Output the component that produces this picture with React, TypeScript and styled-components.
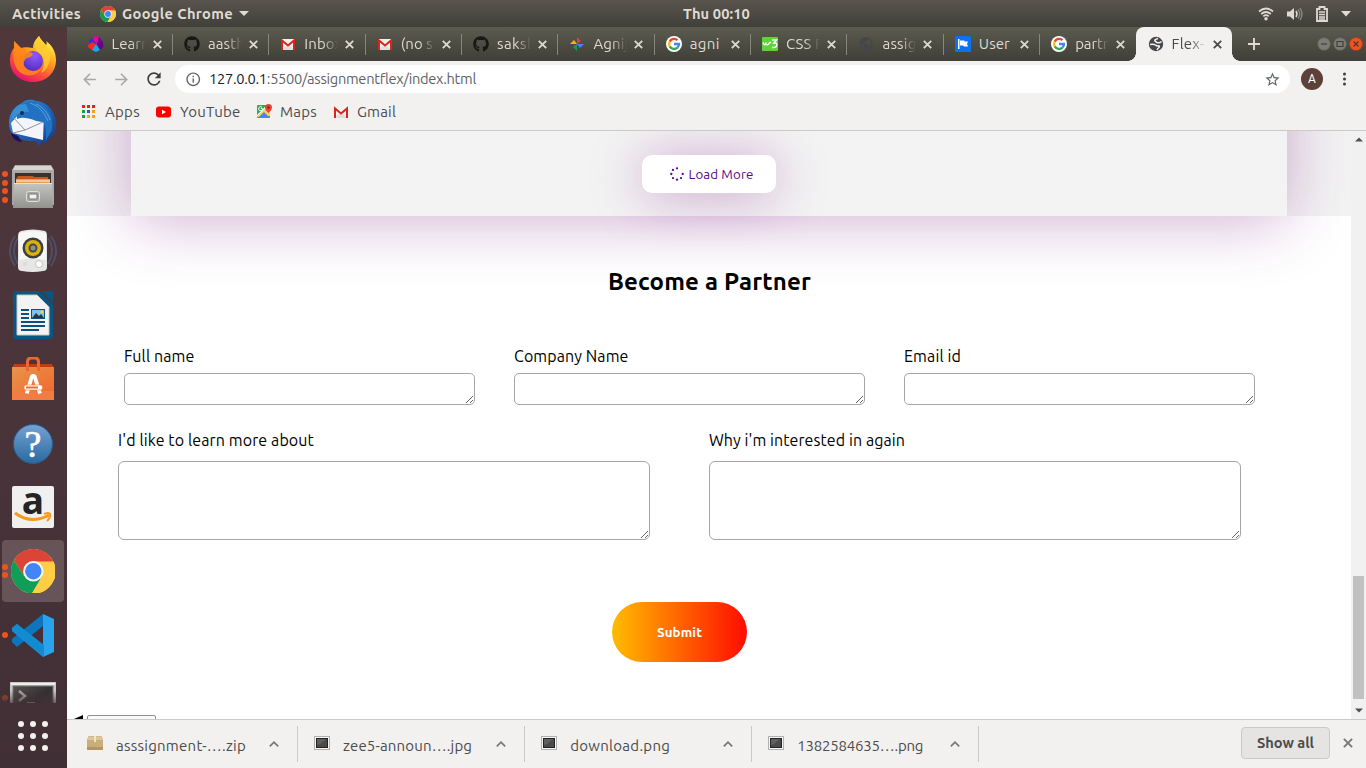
import React, { useLayoutEffect, useRef, useState } from "react";
import styled, { createGlobalStyle, css } from "styled-components";
import { FaGithub } from "react-icons/fa";
import { MdPublic, MdStarBorder, MdRefresh, MdArrowBack, MdArrowForward, MdInfoOutline } from "react-icons/md";

const GlobalStyle = createGlobalStyle`
  * { box-sizing: border-box; }
  html, body { margin: 0; padding: 0; overflow: hidden; }
  body { font-family: Ubuntu, "Noto Sans", "Open Sans", sans-serif; color: #000; }
  svg { display: block; flex: none; }
`;

/* ---------- text that keeps a given line length ---------- */

const Line = styled.span<{ $size: number; $weight?: number; $color?: string }>`
  display: inline-block;
  flex: none;
  white-space: nowrap;
  line-height: 20px;
  font-size: ${(p) => p.$size}px;
  font-weight: ${(p) => p.$weight || 400};
  color: ${(p) => p.$color || "inherit"};
`;

type FitProps = { width: number; size: number; weight?: number; color?: string; children: React.ReactNode };

function Fit({ width, size, weight, color, children }: FitProps) {
  const ref = useRef<HTMLSpanElement>(null);
  const [spacing, setSpacing] = useState(0);
  useLayoutEffect(() => {
    const el = ref.current;
    if (!el) return;
    const length = (el.textContent || "").length;
    el.style.letterSpacing = "0px";
    setSpacing((width - el.getBoundingClientRect().width) / length);
  }, [width]);
  return (
    <Line ref={ref} $size={size} $weight={weight} $color={color} style={{ letterSpacing: `${spacing}px` }}>
      {children}
    </Line>
  );
}

/* ---------- desktop shell ---------- */

const Desktop = styled.div`
  width: 1366px;
  height: 768px;
  display: grid;
  grid-template: 27px 741px / 67px 1299px;
  overflow: hidden;
  background: #fff;
`;

const TopBar = styled.header`
  grid-column: 1 / 3;
  display: grid;
  grid-template-columns: 671px auto 1fr;
  align-items: center;
  padding: 0 15px 0 12px;
  color: #dfdbd2;
  background: linear-gradient(#59554e, #403f39);
`;

const BarGroup = styled.div<{ $end?: boolean; $gap: number }>`
  display: flex;
  align-items: center;
  gap: ${(p) => p.$gap}px;
  justify-content: ${(p) => (p.$end ? "flex-end" : "flex-start")};
`;

const AppName = styled.div`
  display: flex;
  align-items: center;
  gap: 6px;
  margin-left: 19px;
`;

const Dock = styled.nav`
  display: flex;
  flex-direction: column;
  background: linear-gradient(#50373a, #49343a 50%, #402f35);
`;

const Slot = styled.div<{ $active?: boolean; $clip?: boolean }>`
  position: relative;
  height: ${(p) => (p.$clip ? 36 : 64)}px;
  flex: none;
  display: flex;
  justify-content: center;
  align-items: ${(p) => (p.$clip ? "flex-start" : "center")};
  width: 66px;
  overflow: hidden;
  ${(p) =>
    p.$clip &&
    css`
      padding-top: 15px;
      mask-image: linear-gradient(#000 65%, rgba(0, 0, 0, 0.3));
    `}
  ${(p) =>
    p.$active &&
    css`
      height: 62px;
      margin: 1px 2px;
      width: 62px;
      border-radius: 4px;
      background: #665459;
    `}
`;

const RunningDots = styled.div<{ $active?: boolean; $clip?: boolean }>`
  position: absolute;
  left: ${(p) => (p.$active ? 0 : 2)}px;
  top: ${(p) => (p.$clip ? 26 : 0)}px;
  bottom: 0;
  display: flex;
  flex-direction: column;
  justify-content: center;
  gap: 2.6px;
  opacity: ${(p) => (p.$clip ? 0.6 : 1)};
`;

const Dot = styled.i`
  width: 6px;
  height: 6px;
  border-radius: 50%;
  background: #e95420;
`;

const AppsButton = styled.div`
  flex: 1;
  width: 66px;
  display: grid;
  grid-template-columns: repeat(3, 6px);
  grid-auto-rows: 6px;
  gap: 6px;
  justify-content: center;
  align-content: center;
  i { border-radius: 50%; background: #f2f1f0; }
`;

/* ---------- browser chrome ---------- */

const Browser = styled.section`
  display: flex;
  flex-direction: column;
  min-width: 0;
  background: #f2f1f0;
`;

const TabStrip = styled.div`
  height: 34px;
  flex: none;
  display: flex;
  padding-left: 8.6px;
  background: linear-gradient(#5b5b4f, #403f38);
`;

const Tab = styled.div<{ $active?: boolean; $bare?: boolean }>`
  position: relative;
  width: 96.36px;
  flex: none;
  display: flex;
  align-items: center;
  padding-left: 12px;
  gap: 8px;
  color: #dfdbd2;
  &::after {
    content: "";
    position: absolute;
    right: -1px;
    top: 7px;
    width: 1px;
    height: 21px;
    background: ${(p) => (p.$bare || p.$active ? "transparent" : "#87867b")};
  }
  ${(p) =>
    p.$active &&
    css`
      color: #4a4a4a;
      background: #f2f1f0;
      border-radius: 8px 8px 0 0;
      &::before {
        content: "";
        position: absolute;
        left: -8px;
        right: -8px;
        bottom: 0;
        height: 8px;
        background: radial-gradient(circle at 0 0, transparent 7.5px, #f2f1f0 8px) left / 8px 8px no-repeat,
          radial-gradient(circle at 100% 0, transparent 7.5px, #f2f1f0 8px) right / 8px 8px no-repeat;
      }
    `}
`;

const TabTitle = styled.div<{ $fade: boolean }>`
  width: 34px;
  flex: none;
  overflow: hidden;
  height: 20px;
  margin-right: -1px;
  mask-image: ${(p) => (p.$fade ? "linear-gradient(90deg, #000 55%, transparent)" : "none")};
`;

const NewTab = styled.div`
  width: 44px;
  display: flex;
  align-items: center;
  justify-content: center;
`;

const WindowButtons = styled.div`
  margin-left: auto;
  display: flex;
  align-items: center;
  gap: 2px;
  padding-right: 3.5px;
`;

const Toolbar = styled.div`
  height: 36px;
  flex: none;
  display: flex;
  align-items: center;
  padding-left: 12.5px;
  color: #4c4c4c;
`;

const NavIcon = styled.div<{ $dim?: boolean }>`
  width: 32px;
  display: flex;
  color: ${(p) => (p.$dim ? "#a9a8a8" : "#3f3f3f")};
`;

const Omnibox = styled.div`
  width: 1115px;
  height: 28px;
  margin: 0 0 0 -0.5px;
  border-radius: 14px;
  background: #fff;
  display: flex;
  align-items: center;
  padding: 0 9.5px 0 10px;
  gap: 7.5px;
  color: #5f6368;
  > :last-child { margin-left: auto; }
  b { font-weight: 400; color: #202124; }
`;

const Avatar = styled.div`
  width: 22px;
  height: 22px;
  margin: 0 20px 0 11px;
  border-radius: 50%;
  background: #5d4037;
  color: #fff;
  font: 12px/22px Roboto, sans-serif;
  text-align: center;
`;

const Bookmarks = styled.div`
  height: 34px;
  flex: none;
  display: flex;
  align-items: center;
  padding: 0 0 4px 15px;
  border-bottom: 1px solid #cbcac9;
  color: #4c4c4c;
`;

const Bookmark = styled.div<{ $gap: number; $after: number }>`
  display: flex;
  align-items: center;
  gap: ${(p) => p.$gap}px;
  margin-right: ${(p) => p.$after}px;
`;

/* ---------- web page ---------- */

const Viewport = styled.div`
  height: 588px;
  flex: none;
  display: flex;
  background: #fff;
`;

const Page = styled.main`
  width: 1284px;
  height: 588px;
  overflow: hidden;
`;

const Listing = styled.div`
  display: flow-root;
  height: 85px;
  padding: 0 64px;
  background: #f3f3f3;
`;

/* the card goes on above the visible part of the page */
const Card = styled.div`
  height: 385px;
  margin-top: -300px;
  padding-top: 324px;
  display: flex;
  justify-content: center;
  align-items: flex-start;
  background: #f3f3f3;
  box-shadow: 0 5px 60px rgba(110, 0, 115, 0.31);
`;

const LoadMore = styled.div`
  width: 134px;
  height: 38px;
  border-radius: 10px;
  background: #fff;
  display: flex;
  align-items: center;
  padding-left: 28px;
  gap: 4.5px;
  box-shadow: 0 3px 52px rgba(120, 0, 125, 0.34);
  > span { padding-top: 1px; }
`;

const Partner = styled.form`
  position: relative;
  display: flex;
  flex-direction: column;
`;

const Heading = styled.h2`
  margin: 51px 0 0 541px;
  height: 30px;
  line-height: 30px;
  display: flex;
  align-items: center;
`;

const FieldRow = styled.div<{ $left: number; $top: number; $gap: number }>`
  display: flex;
  margin: ${(p) => p.$top}px 0 0 ${(p) => p.$left}px;
  gap: ${(p) => p.$gap}px;
`;

const Field = styled.label<{ $gap: number }>`
  display: flex;
  flex-direction: column;
  align-items: flex-start;
  gap: ${(p) => p.$gap}px;
`;

const Area = styled.textarea<{ $w: number; $h: number; $r: number }>`
  display: block;
  width: ${(p) => p.$w}px;
  height: ${(p) => p.$h}px;
  border: 1px solid #a6a6a6;
  border-radius: ${(p) => p.$r}px;
  background: #fff;
  outline: none;
`;

const Submit = styled.div`
  width: 135px;
  height: 60px;
  margin: 62px 0 0 545px;
  border-radius: 30px;
  display: flex;
  align-items: center;
  justify-content: center;
  background: linear-gradient(90deg, #ffbc00, #ff0c00);
  > span { padding-top: 1px; }
`;

const Footer = styled.div`
  margin: 53px 0 0 7px;
  display: flex;
  gap: 4px;
`;

const Stub = styled.div`
  width: 69px;
  height: 20px;
  border: 1px solid #8f8f8f;
  border-radius: 2px;
  background: #fafafa;
`;

const Scrollbar = styled.div`
  width: 15px;
  display: flex;
  flex-direction: column;
  align-items: center;
  padding: 6px 0;
  background: #f1f1f1;
`;

const Thumb = styled.div`
  width: 11px;
  height: 124px;
  margin: 434px 0 9px;
  background: #c1c1c1;
`;

/* ---------- downloads ---------- */

const Downloads = styled.footer`
  flex: 1;
  display: flex;
  padding: 6px 0 6px 4px;
  border-top: 1px solid #cbcac9;
  color: #4c4c4c;
`;

const Download = styled.div`
  width: 227.1px;
  height: 36px;
  display: flex;
  align-items: center;
  padding: 0 18px 0 16px;
  gap: 13px;
  border-right: 1px solid #cbcac9;
  > :first-child { margin-top: -2px; }
  > :last-child { margin-left: auto; }
  > span { margin-top: 4px; }
`;

const ShowAll = styled.div`
  width: 89px;
  height: 32px;
  margin: 1px 13px 0 auto;
  border: 1px solid #cbcac9;
  border-radius: 4px;
  background: #e5e4e3;
  display: flex;
  align-items: center;
  justify-content: center;
`;

const CloseBar = styled.div`
  display: flex;
  align-items: center;
  height: 34px;
  padding-right: 13px;
`;

/* ---------- drawings ---------- */

const ChromeLogo = ({ size }: { size: number }) => (
  <svg width={size} height={size} viewBox="0 0 48 48">
    <circle cx="24" cy="24" r="24" fill="#ffce44" />
    <path d="M3.2 12A24 24 0 0 1 44.8 12L46 14H24L14 29Z" fill="#db4437" />
    <path d="M3.2 12A24 24 0 0 0 22.5 47.9L34 29H14Z" fill="#0f9d58" />
    <path d="M24 13.500H45.700A24 24 0 0 1 22.500 48L33.500 29Z" fill="#ffce44" />
    <circle cx="24" cy="24" r="11" fill="#f5f5f5" />
    <circle cx="24" cy="24" r="8.800" fill="#4285f4" />
  </svg>
);

const Cross = ({ size = 9, color, w = 1.8 }: { size?: number; color: string; w?: number }) => (
  <svg width={size} height={size} viewBox="0 0 9 9">
    <path d="M.8.8 8.2 8.2M8.2.8.8 8.2" stroke={color} strokeWidth={w} />
  </svg>
);

const Firefox = () => (
  <svg width="46" height="47" viewBox="0 0 46 47">
    <defs>
      <linearGradient id="ffBody" x1=".85" y1=".1" x2=".3" y2="1">
        <stop offset="0" stopColor="#fff44f" /><stop offset=".35" stopColor="#ffa61c" />
        <stop offset=".65" stopColor="#ff5634" /><stop offset="1" stopColor="#e5106e" />
      </linearGradient>
      <radialGradient id="ffCore" cx=".6" cy=".25" r=".8">
        <stop offset="0" stopColor="#9059ff" /><stop offset="1" stopColor="#502bbd" />
      </radialGradient>
    </defs>
    <path d="M29 0c2 4 5 6 7 9 1-1 1-2 0-4 7 5 10 12 10 19 0 13-10 22-23 22S0 37 0 25C0 19 2 14 4 12V5l7 7c3-1 6-1 12 0 0-5 3-9 6-12z" fill="url(#ffBody)" />
    <circle cx="23" cy="25" r="10" fill="url(#ffCore)" />
    <path d="M4 5l7 7c3 0 5 1 6 4 2 0 5 0 6 2-1 3-3 3-6 4-3 2-4 5-3 8 3 5 10 7 17 3-4 8-18 9-24 0C3 27 3 18 4 12z" fill="#ff8a16" opacity=".85" />
    <path d="M29 0c2 6 12 11 11 22-1 7-4 13-9 15 6-10 3-17-3-21-5-4-3-11 1-16z" fill="#ffcd32" opacity=".8" />
  </svg>
);

const Thunderbird = () => (
  <svg width="50" height="48" viewBox="0 0 50 48">
    <defs><linearGradient id="tb" x1="0" y1="0" x2="1" y2="1"><stop offset="0" stopColor="#38a3e0" /><stop offset=".5" stopColor="#1f63b8" /><stop offset="1" stopColor="#133b86" /></linearGradient></defs>
    <path d="M14 4c4-4 10-4 14-2 12 1 20 11 20 23 0 5-1 9-3 12l-1-3c-1 6-5 9-9 11l1-4-6 6-2-5C15 43 5 38 2 31-1 20 3 9 14 4z" fill="url(#tb)" />
    <path d="m3 24 9-10 24 2-1 25L5 34z" fill="#f4f5f8" />
    <path d="m4 17 13 14 18-8M17 31 5 34" fill="none" stroke="#8f929c" />
    <path d="M9 12C13 3 19 0 28 3c12 3 18 15 16 28l-6 10c0-8 0-14-3-18-9 0-16-7-26-3z" fill="#2371c2" />
    <path d="M4 20c0-9 6-15 14-15l3 8C14 12 9 15 4 20z" fill="#3890d4" />
    <path d="M22 4c9 3 14 9 18 18M28 5c7 3 12 9 14 16" fill="none" stroke="#51a5df" />
    <circle cx="14" cy="14" r="2" fill="#152f58" />
    <path d="m3 34 7 3 4 6C8 43 4 39 3 34z" fill="#20105c" />
  </svg>
);

const Files = () => (
  <svg width="42" height="44" viewBox="0 0 42 44">
    <defs><linearGradient id="fl" x1="0" y1="0" x2="0" y2="1"><stop offset="0" stopColor="#c4c4c2" /><stop offset="1" stopColor="#92928f" /></linearGradient></defs>
    <path d="M3 0h36l3 5v35H0V5z" fill="#a9a9a7" />
    <path d="M3 1h36l2 4H1z" fill="#d5d5d3" />
    <path d="M3 8h36v12H3z" fill="#3a302c" />
    <path d="M6 11h15l1 1h14v2l2 1v4H4v-5z" fill="#c9561f" /><path d="M4 14h34v4H4z" fill="#e99a55" /><path d="M4 15.500h34v1H4z" fill="#fff0e0" />
    <path d="M2 18h38l1 25H1z" fill="url(#fl)" />
    <path d="M2 18.500h38" stroke="#e4e4e2" />
    <rect x="14.500" y="26.500" width="13" height="10" rx="2" fill="#a6a6a4" stroke="#dededc" />
    <rect x="17" y="29" width="8" height="5" rx="1" fill="#f1f1f1" stroke="#777" />
  </svg>
);

const Speaker = () => (
  <svg width="50" height="44" viewBox="0 0 50 44">
    <g fill="none" stroke="#506084" opacity=".6"><path d="M7 7Q-3 22 7 37M10 9Q2 22 10 35M43 7Q53 22 43 37M40 9Q48 22 40 35" strokeWidth="2" /></g>
    <path d="M13 2Q25-1 37 2q2 1 2 5v31q0 4-4 4-10 2-21 0-4 0-4-4V7q0-4 3-5z" fill="#e6e7e5" />
    <path d="M11 4Q25 0 38 4v27q-13-3-27 0z" fill="#f7f7f6" />
    <circle cx="25" cy="19" r="10.500" fill="#3e3f3b" /><circle cx="25" cy="19" r="8" fill="#d8b010" />
    <circle cx="25" cy="19" r="4.500" fill="#4a4a42" /><circle cx="25" cy="19" r="2.500" fill="#8e9388" />
    <circle cx="31" cy="35" r="3.500" fill="#fff" stroke="#c5c5c5" /><rect x="15" y="33" width="4" height="4" fill="#ddd" />
  </svg>
);

const Writer = () => (
  <svg width="40" height="48" viewBox="0 0 40 48">
    <path d="M2 0h24l14 14v32l-2 2H2l-2-2V2z" fill="#0a5584" />
    <path d="M28 0h10l2 2v10z" fill="#0a5584" />
    <path d="M4 4h20l12 12v28H4z" fill="#f3f3f2" stroke="#c7c7c7" />
    <g fill="#0b5180"><path d="M8 18h8v2H8zM8 22h8v2H8zM8 26h8v2H8zM8 30h24v2H8zM8 34h24v2H8zM8 38h18v2H8z" /></g>
    <rect x="18" y="18" width="14" height="10" fill="#0b5180" /><rect x="19" y="19" width="12" height="8" fill="#7fc4e8" />
    <path d="m19 27 4-5 3 3 2-2 3 4z" fill="#333" /><circle cx="29" cy="21" r="1.500" fill="#ffd42a" />
  </svg>
);

const Software = () => (
  <svg width="42" height="44" viewBox="0 0 42 44">
    <defs><linearGradient id="sw" x1="0" y1="0" x2="1" y2="1"><stop offset="0" stopColor="#e9944b" /><stop offset="1" stopColor="#f0652b" /></linearGradient></defs>
    <path d="M2 7h38l2 4H0z" fill="#bd3d15" />
    <path d="M0 10h42v33H0z" fill="url(#sw)" /><path d="M0 34h42v9H0z" fill="#f17d43" />
    <path d="M15.500 14V5q0-4 4-4h3q4 0 4 4v9" fill="none" stroke="#e86836" strokeWidth="3" />
    <path d="M14.800 36.500 20 19h2.500L28 36.500" fill="none" stroke="#fff" strokeWidth="3.800" strokeLinejoin="bevel" />
    <rect x="12" y="28" width="18.500" height="5" rx="2" fill="#fff" stroke="#ee7740" strokeWidth=".6" /><path d="M14 30.500h12" stroke="#eb6f34" strokeWidth="2" />
  </svg>
);

const Help = () => (
  <svg width="42" height="44" viewBox="0 0 42 44">
    <defs><linearGradient id="hp" x1="0" y1="0" x2="0" y2="1"><stop offset="0" stopColor="#75a2d5" /><stop offset="1" stopColor="#29699f" /></linearGradient></defs>
    <circle cx="21" cy="23" r="19.500" fill="url(#hp)" stroke="#295d90" />
    <text x="21" y="36" textAnchor="middle" fontFamily="Liberation Serif" fontSize="38" fill="#fff" stroke="#fff" strokeWidth=".6">?</text>
  </svg>
);

const Amazon = () => (
  <svg width="42" height="42" viewBox="0 0 42 42" overflow="visible">
    <rect width="42" height="42" rx="2" fill="#f0f0f0" />
    <text x="21" y="28" textAnchor="middle" fontFamily="Open Sans, Noto Sans" fontWeight="700" fontSize="37" fill="#242424">a</text>
    <path d="M3 27q16 12 34 2" fill="none" stroke="#f79a1c" strokeWidth="3" />
    <path d="M32 28q5-2 6 0 1 3-3 7" fill="none" stroke="#f79a1c" strokeWidth="2" />
  </svg>
);

const VSCode = () => (
  <svg width="43" height="43" viewBox="0 0 43 43">
    <path d="M31 0 42 5v33l-11 5z" fill="#29a3ee" />
    <path d="M31 0v12L5 33l-5-5v-3z" fill="#0b75bd" />
    <path d="M31 43V31L5 10l-5 4v3z" fill="#168ed6" />
    <path d="M0 14l5-4 27 21v12l-2-1z" fill="#128bd0" />
  </svg>
);

const Terminal = () => (
  <svg width="46" height="40" viewBox="0 0 46 40">
    <defs><linearGradient id="tm" x1="0" y1="0" x2="1" y2="1"><stop offset="0" stopColor="#565150" /><stop offset=".5" stopColor="#343031" /><stop offset="1" stopColor="#454142" /></linearGradient></defs>
    <rect width="46" height="40" fill="#c9c8c7" /><rect x="1" y="1" width="44" height="2" fill="#eee" />
    <rect x="3" y="4" width="40" height="36" fill="url(#tm)" stroke="#777" />
    <path d="m9 9 6 5-6 5" fill="none" stroke="#aaa" strokeWidth="2.500" /><path d="M17 21h8" stroke="#aaa" strokeWidth="2" />
  </svg>
);

const GoogleG = () => (
  <svg width="16" height="16" viewBox="0 0 16 16">
    <circle cx="8" cy="8" r="8" fill="#fff" />
    <g fill="none" strokeWidth="2.300">
      <path d="M11.500 4.200A5 5 0 0 0 3.700 5.600" stroke="#ea4335" /><path d="M3.700 5.600A5 5 0 0 0 3.700 10.400" stroke="#fbbc05" />
      <path d="M3.700 10.400A5 5 0 0 0 11.400 11.700" stroke="#34a853" /><path d="M8 8h5A5 5 0 0 1 11.400 11.700" stroke="#4285f4" />
    </g>
  </svg>
);

const GmailM = () => (
  <svg width="16" height="16" viewBox="0 0 16 16">
    <path d="M1 3h14v11H1z" fill="#f1f1f1" /><path d="m1 14 7-5 7 5z" fill="#dedede" />
    <path d="M2 14V4.500l6 5 6-5V14" fill="none" stroke="#d9261c" strokeWidth="2" />
  </svg>
);

const Learn = () => (
  <svg width="16" height="16" viewBox="0 0 16 16">
    <path d="M7 0 11 1 10 8 4 5z" fill="#f000a4" /><path d="m11 1 4 5 .5 5-3.500 3-3-6z" fill="#6b008e" />
    <path d="m0 6 6 0 2 3-4 5-4-3z" fill="#f32b22" /><path d="m8 8 4 6-4 2-4-2z" fill="#18a8ee" /><path d="m4 2 4 6-4-2-4 3 1-4z" fill="#2435d7" />
  </svg>
);

const Pinwheel = () => (
  <svg width="16" height="16" viewBox="0 0 16 16">
    <path d="M8 8V1l4 4z" fill="#db4437" /><path d="M8 8h7l-4 4z" fill="#4285f4" /><path d="M8 8v7l-4-4z" fill="#0f9d58" /><path d="M8 8H1l4-4z" fill="#f4b400" />
  </svg>
);

const W3 = () => (
  <svg width="16" height="16" viewBox="0 0 16 16">
    <rect y="1" width="16" height="14" rx="1" fill="#5fd43a" />
    <path d="M1 6.500q1.500 4 3 1 1.500 3 3.500-.500L9 6M10 4h4.500l-2.500 3q3-.300 2.800 2.200t-4.600 2.300" fill="none" stroke="#fff" strokeWidth="1.500" />
  </svg>
);

const Flag = () => (
  <svg width="16" height="16" viewBox="0 0 16 16"><rect width="16" height="16" rx="1.500" fill="#0b73f0" /><path d="M3 3h1.500v10H3zM5 4.500h4l1 1h3l-1 2.500 1 2.500H9l-1-1H5z" fill="#fff" /></svg>
);

const Globe = () => (
  <svg width="16" height="16" viewBox="0 0 16 16">
    <circle cx="8" cy="8" r="7.200" fill="#45474a" />
    <path d="M13.500 5.500q-2 2-4.500 1Q6 4.800 7 3.800q1-.8 3-1.300M2 8.500q4-.5 5.500.5 1.500 1.500 3 .8 1.500 0 .5 1.700-1.500 1-2 2.500" fill="none" stroke="#f2f1f0" strokeWidth="1.500" />
  </svg>
);

const Apps = () => (
  <svg width="13" height="13" viewBox="0 0 13 13">
    {["#ea1c1c", "#ea1c1c", "#ea1c1c", "#0f9d58", "#1a5fe0", "#fba005", "#0f9d58", "#fba005", "#fba005"].map((c, i) => (
      <rect key={i} x={(i % 3) * 5} y={Math.floor(i / 3) * 5} width="3" height="3" fill={c} />
    ))}
  </svg>
);

const YouTube = () => (
  <svg width="15" height="12" viewBox="0 0 15 12"><rect y=".5" width="15" height="11" rx="3" fill="#f00" /><path d="m6 3.700 4 2.300-4 2.300z" fill="#fff" /></svg>
);

const Maps = () => (
  <svg width="15" height="15" viewBox="0 0 15 15">
    <rect y="1" width="13" height="13" rx="1" fill="#34a853" /><path d="M0 13 12 1l1 1v10z" fill="#fbd14b" /><path d="m1 14 6-6 6 6z" fill="#4285f4" />
    <path d="M0 12 12 0" stroke="#fff" strokeWidth="1.500" /><path d="M11.500 9Q8 6 8 3.500a3.500 3.500 0 0 1 7 0Q15 6 11.500 9z" fill="#ea4335" /><circle cx="11.500" cy="3.500" r="1.200" fill="#8e1b12" />
    <path d="M5.500 4.500H3.800M5 3.300a2 2 0 1 0 .6 1.500" stroke="#fff" fill="none" />
  </svg>
);

const Spinner = () => (
  <svg width="14" height="14" viewBox="0 0 14 14" fill="#5c068c">
    {[0, 45, 90, 135, 180, 225, 270].map((a) => (
      <circle key={a} cx={7 + 5.700 * Math.cos((a * Math.PI) / 180)} cy={7 + 5.700 * Math.sin((a * Math.PI) / 180)} r="1.150" />
    ))}
  </svg>
);

const StatusIcons = () => (
  <>
    <svg width="16" height="14" viewBox="0 0 16 14" fill="none" stroke="#dfdbd2" strokeWidth="1.700">
      <path d="M1 4.500Q8-1.500 15 4.500M3.200 7Q8 3 12.800 7M5.300 9.300Q8 7 10.700 9.300" /><circle cx="8" cy="11.700" r="1.700" fill="#dfdbd2" stroke="none" />
    </svg>
    <svg width="16" height="14" viewBox="0 0 16 14" fill="none">
      <path d="M0 4.500h3L7 1v12L3 9.500H0z" fill="#dfdbd2" /><path d="M9 4q2 3 0 6" stroke="#dfdbd2" strokeWidth="1.500" />
      <path d="M11 2.500q3.500 4.500 0 9M13 1q4 6 0 12" stroke="#8d8a84" strokeWidth="1.300" />
    </svg>
    <svg width="12" height="16" viewBox="0 0 12 16" fill="none" stroke="#dfdbd2">
      <path d="M1 3h2.500V1h5v2H11v12H1z" strokeWidth="1.800" /><path d="M3 6h6M3 8.500h6M3 11h6M3 13h6" strokeWidth="1.300" />
    </svg>
    <svg width="10" height="6" viewBox="0 0 10 6"><path d="M0 0h10L5 5.500z" fill="#dfdbd2" /></svg>
  </>
);

const Archive = () => (
  <svg width="16" height="14" viewBox="0 0 16 14"><path d="M1.500 0h13L16 4v9q0 1-1 1H1q-1 0-1-1V4z" fill="#c9ad7b" /><path d="M1.500.500h13L16 4H0z" fill="#dcc69b" /><path d="M7 0h2v6H7z" fill="#f0e3c6" /><path d="M0 11h16v2q0 1-1 1H1q-1 0-1-1z" fill="#b5945f" /></svg>
);

const Picture = () => (
  <svg width="16" height="14" viewBox="0 0 16 14"><rect x=".5" y=".5" width="15" height="13" fill="#f7f7f7" stroke="#b0b0b0" /><rect x="2.500" y="2.500" width="11" height="9" fill="#4a4a4a" stroke="#222" /><path d="M3 3h9l-6 5-3 1z" fill="#606060" /></svg>
);

const Chevron = () => (
  <svg width="10" height="6" viewBox="0 0 10 6"><path d="m.8 5.400 4.200-4.200 4.200 4.200" fill="none" stroke="#777" strokeWidth="1.700" /></svg>
);

/* ---------- data ---------- */

const tabs: { icon: React.ReactNode; title: string; width: number }[] = [
  { icon: <Learn />, title: "Learn", width: 38 },
  { icon: <FaGithub size={16} color="#191717" />, title: "aasth", width: 37 },
  { icon: <GmailM />, title: "Inbox", width: 38 },
  { icon: <GmailM />, title: "(no s", width: 32 },
  { icon: <FaGithub size={16} color="#191717" />, title: "saksh", width: 39 },
  { icon: <Pinwheel />, title: "Agnij", width: 35 },
  { icon: <GoogleG />, title: "agni", width: 30 },
  { icon: <W3 />, title: "CSS F", width: 37 },
  { icon: <MdPublic size={16} color="#44474a" />, title: "assig", width: 34 },
  { icon: <Flag />, title: "User", width: 31 },
  { icon: <GoogleG />, title: "partn", width: 36 },
  { icon: <Globe />, title: "Flex-", width: 33 },
];

const dock: { icon: React.ReactNode; dots?: number; active?: boolean; clip?: boolean }[] = [
  { icon: <Firefox /> },
  { icon: <Thunderbird /> },
  { icon: <Files />, dots: 4 },
  { icon: <Speaker /> },
  { icon: <Writer /> },
  { icon: <Software /> },
  { icon: <Help /> },
  { icon: <Amazon /> },
  { icon: <ChromeLogo size={44.6} />, dots: 2, active: true },
  { icon: <VSCode />, dots: 1 },
  { icon: <Terminal />, dots: 1, clip: true },
];

const downloads = [
  { icon: <Archive />, name: "asssignment-….zip", width: 130 },
  { icon: <Picture />, name: "zee5-announ….jpg", width: 129 },
  { icon: <Picture />, name: "download.png", width: 100 },
  { icon: <Picture />, name: "1382584635….png", width: 126 },
];

export default function App() {
  return (
    <Desktop>
      <GlobalStyle />
      <TopBar>
        <BarGroup $gap={0}>
          <Fit width={69} size={14.667} weight={700}>Activities</Fit>
          <AppName>
            <ChromeLogo size={16} />
            <Fit width={111} size={14.667} weight={700}>Google Chrome</Fit>
            <svg width="10" height="6" viewBox="0 0 10 6"><path d="M0 0h10L5 5z" fill="#dfdbd2" /></svg>
          </AppName>
        </BarGroup>
        <Fit width={67} size={14.667} weight={700}>Thu 00:10</Fit>
        <BarGroup $gap={13} $end><StatusIcons /></BarGroup>
      </TopBar>

      <Dock>
        {dock.map((d, i) => (
          <Slot key={i} $active={d.active} $clip={d.clip}>
            {d.dots && (
              <RunningDots $active={d.active} $clip={d.clip}>
                {Array.from({ length: d.dots }, (_, k) => <Dot key={k} />)}
              </RunningDots>
            )}
            {d.icon}
          </Slot>
        ))}
        <AppsButton>{Array.from({ length: 9 }, (_, i) => <i key={i} />)}</AppsButton>
      </Dock>

      <Browser>
        <TabStrip>
          {tabs.map((t, i) => (
            <Tab key={i} $active={i === 11} $bare={i === 10}>
              {t.icon}
              <TabTitle $fade={t.width > 31}>
                <Fit width={t.width} size={15}>{t.title}</Fit>
              </TabTitle>
              <Cross color={i === 11 ? "#4a4a4a" : "#dfdbd2"} />
            </Tab>
          ))}
          <NewTab><svg width="12" height="12" viewBox="0 0 12 12"><path d="M6 0v12M0 6h12" stroke="#dfdbd2" strokeWidth="1.900" /></svg></NewTab>
          <WindowButtons>
            {["M4 7h6", "M4 4.500h6v5H4z", "M4.500 4.500l5 5M9.500 4.500l-5 5"].map((d, i) => (
              <svg key={i} width="14" height="14" viewBox="0 0 14 14">
                <circle cx="7" cy="7" r="6.300" fill={i === 2 ? "#f4511e" : "#7c7b74"} stroke={i === 2 ? "#d14312" : "#66655d"} strokeWidth=".6" />
                <path d={d} fill="none" stroke="#3c3b37" strokeWidth="1.100" />
              </svg>
            ))}
          </WindowButtons>
        </TabStrip>

        <Toolbar>
          <NavIcon $dim><MdArrowBack size={19} /></NavIcon>
          <NavIcon $dim><MdArrowForward size={19} /></NavIcon>
          <NavIcon><MdRefresh size={20} /></NavIcon>
          <Omnibox>
            <MdInfoOutline size={16.500} />
            <Fit width={267} size={14.667}><b>127.0.0.1</b>:5500/assignmentflex/index.html</Fit>
            <MdStarBorder size={17} />
          </Omnibox>
          <Avatar>A</Avatar>
          <svg width="3" height="14" viewBox="0 0 3 14" fill="#3f3f3f"><circle cx="1.500" cy="2" r="1.500" /><circle cx="1.500" cy="7" r="1.500" /><circle cx="1.500" cy="12" r="1.500" /></svg>
        </Toolbar>

        <Bookmarks>
          <Bookmark $gap={10} $after={16}><Apps /><Fit width={35} size={15}>Apps</Fit></Bookmark>
          <Bookmark $gap={9} $after={16.500}><YouTube /><Fit width={60.500} size={15}>YouTube</Fit></Bookmark>
          <Bookmark $gap={8} $after={16}><Maps /><Fit width={37} size={15}>Maps</Fit></Bookmark>
          <Bookmark $gap={8} $after={0}><GmailM /><Fit width={39} size={15}>Gmail</Fit></Bookmark>
        </Bookmarks>

        <Viewport>
          <Page>
            <Listing>
              <Card>
                <LoadMore><Spinner /><Fit width={65} size={13.333} color="#5c068c">Load More</Fit></LoadMore>
              </Card>
            </Listing>
            <Partner>
              <Heading><Fit width={203} size={24} weight={700}>Become a Partner</Fit></Heading>
              <FieldRow $left={57} $top={49} $gap={39}>
                <Field $gap={7}><Fit width={70.500} size={16}>Full name</Fit><Area $w={351} $h={32} $r={5} /></Field>
                <Field $gap={7}><Fit width={114.500} size={16}>Company Name</Fit><Area $w={351} $h={32} $r={5} /></Field>
                <Field $gap={7}><Fit width={57} size={16}>Email id</Fit><Area $w={351} $h={32} $r={5} /></Field>
              </FieldRow>
              <FieldRow $left={51} $top={25} $gap={59}>
                <Field $gap={11}><Fit width={196} size={16}>I'd like to learn more about</Fit><Area $w={532} $h={79} $r={6} /></Field>
                <Field $gap={11}><Fit width={196} size={16}>Why i'm interested in again</Fit><Area $w={532} $h={79} $r={6} /></Field>
              </FieldRow>
              <Submit><Fit width={45} size={13.333} weight={700} color="#fff">Submit</Fit></Submit>
              <Footer>
                <svg width="9" height="8" viewBox="0 0 9 8"><path d="M9 0v8L0 4z" /></svg>
                <Stub />
              </Footer>
            </Partner>
          </Page>
          <Scrollbar>
            <svg width="8" height="5" viewBox="0 0 8 5"><path d="M0 4.500h8L4 .5z" fill="#505050" /></svg>
            <Thumb />
            <svg width="8" height="5" viewBox="0 0 8 5"><path d="M0 .5h8L4 4.500z" fill="#505050" /></svg>
          </Scrollbar>
        </Viewport>

        <Downloads>
          {downloads.map((d) => (
            <Download key={d.name}>
              {d.icon}
              <Fit width={d.width} size={15}>{d.name}</Fit>
              <Chevron />
            </Download>
          ))}
          <ShowAll><Fit width={57} size={14.667} weight={700}>Show all</Fit></ShowAll>
          <CloseBar><Cross size={10} color="#777" w={1.700} /></CloseBar>
        </Downloads>
      </Browser>
    </Desktop>
  );
}
